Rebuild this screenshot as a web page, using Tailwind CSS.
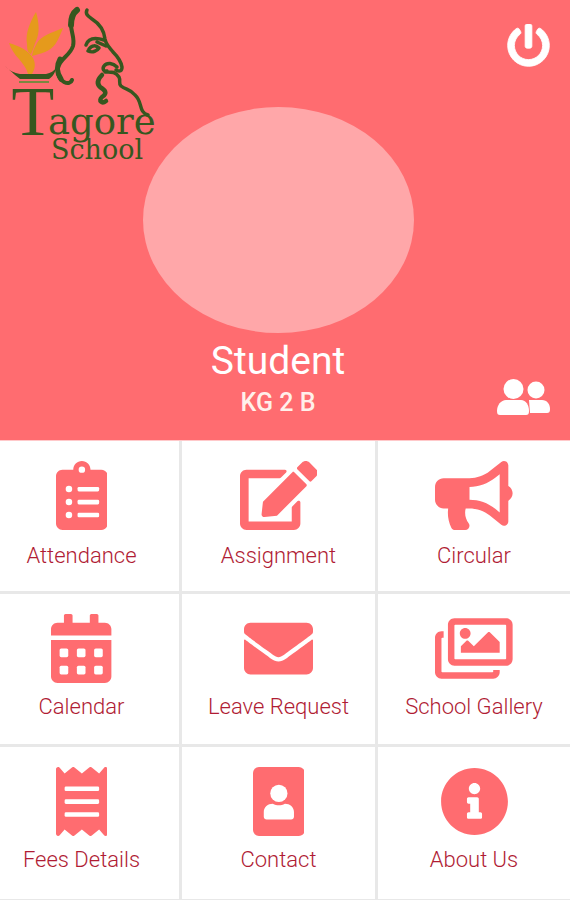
<!DOCTYPE html>
<html lang="en">

<head>
    <meta charset="UTF-8">
    <meta name="viewport" content="width=device-width, initial-scale=1.0">
    <title>Tagore School</title>
    <script src="https://cdn.jsdelivr.net/npm/@tailwindcss/browser@4"></script>
</head>

<body class="flex min-h-screen flex-col bg-white font-['Roboto',sans-serif]">
    <header class="grid min-h-[440px] grid-cols-[1fr_271px_1fr] bg-[#ff6c70] pr-3.5">
        <!-- School logo -->
        <div class="z-10 w-0">
            <svg class="h-[170px] w-[170px]" viewBox="0 0 170 170" role="img" aria-label="Tagore School">
                <g fill="#e59a1c">
                    <path d="M36 12C30 22 25 34 27 44c0 6 1 9 4 10 2-4 3-8 5-13 4-8 3-19 0-29z" />
                    <path d="M63 28c-12 5-22 8-26 15-3 5-5 10-5 13 6-2 12-3 17-6 7-4 10-12 14-22z" />
                    <path d="M9 43c2 6 6 12 10 16 4 5 8 10 9 15l4 0c3-5 4-10 1-16-4-7-13-12-24-15z" />
                </g>
                <g fill="#36571f">
                    <path d="M5 66c5 5 9 7 15 8h26c5-1 8-3 10-6-1 6-4 9-7 11H20c-4-3-8-7-15-13z" />
                    <path d="M19 81h30v2H19z" fill="#7b873f" />
                </g>
                <g fill="none" stroke="#36571f" stroke-linecap="round" stroke-linejoin="round">
                    <path d="M77 10c-4 3-6 8-6 15" stroke-width="6" />
                    <path d="M71 24c0 9 4 14 2 22-3 10-13 12-15 22-1 7 2 12 6 14 4 2 7 1 8-2" stroke-width="4" />
                    <path d="M60 59c-4 7-3 14 1 20" stroke-width="5" />
                    <path d="M87 10c-2 4 1 6 5 9 8 5 12 11 13 20 1 6 5 9 8 13 4 4 8 9 9 15 0 4-2 5-6 3" stroke-width="3.5" />
                    <path d="M86 45c2-6 8-8 18-5M88 51c5 2 9 0 11-3-3-3-7-3-10 1M97 42l9 4" stroke-width="3.5" />
                    <path d="M117 67c-4-4-10-5-13-1-2 3 0 6 3 5M105 72c6 0 10-1 14 5 2 4-1 6 2 9 5 4 9 3 14 9 8 7 3 17 13 20" stroke-width="3.5" />
                    <path d="M102 75c-5 5-5 9-2 12 5 3 8 6 2 10-4 4 0 7 4 4" stroke-width="4.500" />
                </g>
                <g fill="#36571f">
                    <text x="33" y="135" text-anchor="middle" class="font-['Liberation_Serif',serif] text-[70px]">T</text>
                    <text x="48" y="134" class="font-['DejaVu_Serif',serif] text-[37px]">agore</text>
                    <text x="51" y="159" class="font-['DejaVu_Serif',serif] text-[27px]">School</text>
                </g>
            </svg>
        </div>

        <!-- Student -->
        <div class="flex flex-col items-center pt-[107px] text-white">
            <div class="h-[226px] w-full rounded-[50%] bg-[#ffa7a9]"></div>
            <h1 class="pt-1 text-[39px] leading-[48px]">Student</h1>
            <p class="text-[25px] leading-9 font-medium text-[#fff0ea]">KG 2 B</p>
        </div>

        <div class="flex flex-col items-end justify-between pt-6 pr-1.5 pb-6 text-white">
            <button type="button" aria-label="Log out">
                <svg class="h-[43px] w-[43px]" viewBox="0 0 512 512" fill="currentColor" stroke="currentColor" stroke-width="10">
                    <path d="M400 54.1c63 45 104 118.6 104 201.9 0 136.8-110.8 247.7-247.5 248C120 504.3 8.2 393 8 256.4 7.9 173.1 48.9 99.3 111.8 54.2c11.7-8.3 28-4.8 35 7.7L162.6 90c5.9 10.5 3.1 23.8-6.6 31-41.5 30.8-68 79.6-68 134.9-.1 92.3 74.5 168.1 168 168.1 91.6 0 168.6-74.2 168-169.1-.3-51.8-24.7-101.8-68.1-134-9.7-7.2-12.4-20.5-6.5-30.9l15.8-28.1c7-12.4 23.2-16.1 34.8-7.8zM296 264V24c0-13.3-10.7-24-24-24h-32c-13.3 0-24 10.7-24 24v240c0 13.3 10.7 24 24 24h32c13.3 0 24-10.7 24-24z" />
                </svg>
            </button>
            <button type="button" aria-label="Switch student">
                <svg class="h-[37px] w-[53px]" viewBox="0 0 53 37" fill="currentColor">
                    <circle cx="39" cy="11" r="8.5" />
                    <path d="M32 21h13c5 0 8 4 8 9 0 3-1 4-3 4H33z" />
                    <circle cx="16.500" cy="10" r="10" />
                    <path d="M9 21h15c5 0 8 5 8 11 0 3-1 4-3 4H3c-2 0-3-1-3-4 0-6 4-11 9-11z" />
                </svg>
            </button>
        </div>
    </header>

    <nav class="grid grow grid-cols-[182fr_196fr_192fr] grid-rows-3 border-t border-[#ffc9ca] text-center text-[22px] leading-8 font-light text-[#b01c34]">
        <a href="#attendance" class="flex flex-col items-center border-r-3 border-b-3 border-[#e8e8e8] pt-5 pr-4">
            <svg class="h-[69px] text-[#ff6c70]" viewBox="0 0 384 512" fill="currentColor">
                <path d="M336 64h-80c0-35.300-28.700-64-64-64s-64 28.700-64 64H48C21.500 64 0 85.500 0 112v352c0 26.500 21.500 48 48 48h288c26.500 0 48-21.500 48-48V112c0-26.500-21.500-48-48-48z" />
                <g fill="#fff">
                    <circle cx="192" cy="64" r="24" />
                    <circle cx="96" cy="208" r="24" />
                    <circle cx="96" cy="304" r="24" />
                    <circle cx="96" cy="400" r="24" />
                    <rect x="160" y="192" width="160" height="34" rx="10" />
                    <rect x="160" y="288" width="160" height="34" rx="10" />
                    <rect x="160" y="384" width="160" height="34" rx="10" />
                </g>
            </svg>
            <span class="pt-2.5">Attendance</span>
        </a>
        <a href="#assignment" class="flex flex-col items-center border-r-3 border-b-3 border-[#e8e8e8] pt-5">
            <svg class="h-[69px] text-[#ff6c70]" viewBox="0 0 576 512" fill="currentColor">
                <path d="M402.600 83.200l90.200 90.200c3.800 3.800 3.800 10 0 13.800L274.400 405.600l-92.800 10.300c-12.400 1.400-22.900-9.100-21.500-21.500l10.300-92.800L388.800 83.200c3.800-3.800 10-3.800 13.800 0zm162-22.900l-48.800-48.800c-15.200-15.200-39.900-15.200-55.200 0l-35.400 35.400c-3.800 3.800-3.800 10 0 13.800l90.200 90.200c3.800 3.800 10 3.800 13.800 0l35.400-35.400c15.200-15.300 15.200-40 0-55.200zM384 346.200V448H64V128h229.800c3.200 0 6.200-1.300 8.500-3.500l40-40c7.600-7.600 2.200-20.500-8.500-20.500H48C21.500 64 0 85.500 0 112v352c0 26.500 21.500 48 48 48h352c26.500 0 48-21.500 48-48V306.200c0-10.700-12.900-16-20.500-8.500l-40 40c-2.200 2.300-3.500 5.300-3.500 8.500z" />
            </svg>
            <span class="pt-2.5">Assignment</span>
        </a>
        <a href="#circular" class="flex flex-col items-center border-b-3 border-[#e8e8e8] pt-5">
            <svg class="h-[69px] text-[#ff6c70]" viewBox="0 0 576 512" fill="currentColor">
                <path d="M576 240c0-23.630-12.950-44.040-32-55.120V32.010C544 23.260 537.020 0 512 0c-7.120 0-14.190 2.380-19.980 7.020l-85.030 68.030C364.280 109.190 310.660 128 256 128H64c-35.350 0-64 28.650-64 64v96c0 35.350 28.650 64 64 64h33.700c-1.390 10.480-2.180 21.140-2.180 32 0 39.770 9.260 77.350 25.560 110.940 5.190 10.690 16.520 17.060 28.400 17.060h74.280c26.050 0 41.690-29.840 25.900-50.560-16.400-21.520-26.150-48.360-26.150-77.440 0-11.110 1.620-21.790 4.410-32H256c54.660 0 108.280 18.810 150.980 52.950l85.030 68.030a32.023 32.023 0 0 0 19.980 7.020c24.920 0 32-22.780 32-32V295.130C563.050 284.040 576 263.630 576 240zm-96 141.420l-33.050-26.440C392.950 311.780 325.120 288 256 288v-96c69.120 0 136.950-23.780 190.950-66.980L480 98.580v282.840z" />
            </svg>
            <span class="pt-2.5">Circular</span>
        </a>

        <a href="#calendar" class="flex flex-col items-center border-r-3 border-b-3 border-[#e8e8e8] pt-5 pr-4">
            <svg class="h-[69px] text-[#ff6c70]" viewBox="0 0 448 512" fill="currentColor">
                <path d="M0 464c0 26.500 21.500 48 48 48h352c26.500 0 48-21.500 48-48V192H0v272zM448 160v-48c0-26.500-21.500-48-48-48h-48V12c0-6.600-5.400-12-12-12h-40c-6.600 0-12 5.400-12 12v52H160V12c0-6.600-5.400-12-12-12h-40c-6.600 0-12 5.400-12 12v52H48C21.500 64 0 85.500 0 112v48z" />
                <g fill="#fff">
                    <rect x="64" y="256" width="64" height="64" rx="12" />
                    <rect x="192" y="256" width="64" height="64" rx="12" />
                    <rect x="320" y="256" width="64" height="64" rx="12" />
                    <rect x="64" y="384" width="64" height="64" rx="12" />
                    <rect x="192" y="384" width="64" height="64" rx="12" />
                    <rect x="320" y="384" width="64" height="64" rx="12" />
                </g>
            </svg>
            <span class="pt-2">Calendar</span>
        </a>
        <a href="#leave-request" class="flex flex-col items-center border-r-3 border-b-3 border-[#e8e8e8] pt-5">
            <svg class="h-[69px] text-[#ff6c70]" viewBox="0 0 512 512" fill="currentColor">
                <path d="M502.300 190.800c3.900-3.100 9.700-.2 9.700 4.700V400c0 26.500-21.500 48-48 48H48c-26.500 0-48-21.500-48-48V195.600c0-5 5.700-7.800 9.700-4.700 22.400 17.400 52.100 39.500 154.100 113.600 21.100 15.400 56.700 47.800 92.200 47.600 35.700.3 72-32.800 92.300-47.600 102-74.100 131.600-96.300 154-113.700zM256 320c23.200.4 56.600-29.200 73.400-41.400 132.700-96.300 142.800-104.700 173.400-128.700 5.800-4.500 9.200-11.500 9.200-18.900v-19c0-26.500-21.500-48-48-48H48c-26.500 0-48 21.500-48 48v19c0 7.400 3.400 14.300 9.200 18.900 30.600 23.900 40.700 32.400 173.400 128.700 16.800 12.200 50.200 41.800 73.400 41.400z" />
            </svg>
            <span class="pt-2">Leave Request</span>
        </a>
        <a href="#gallery" class="flex flex-col items-center border-b-3 border-[#e8e8e8] pt-5">
            <svg class="h-[69px] text-[#ff6c70]" viewBox="0 0 576 512" fill="currentColor">
                <path d="M480 416v16c0 26.510-21.490 48-48 48H48c-26.510 0-48-21.490-48-48V176c0-26.510 21.490-48 48-48h16v48H54a6 6 0 0 0-6 6v244a6 6 0 0 0 6 6h372a6 6 0 0 0 6-6v-10h48zm42-336H150a6 6 0 0 0-6 6v244a6 6 0 0 0 6 6h372a6 6 0 0 0 6-6V86a6 6 0 0 0-6-6zm6-48c26.510 0 48 21.490 48 48v256c0 26.510-21.490 48-48 48H144c-26.510 0-48-21.490-48-48V80c0-26.510 21.490-48 48-48h384zM264 144c0 22.091-17.909 40-40 40s-40-17.909-40-40 17.909-40 40-40 40 17.909 40 40zm-72 96l39.515-39.515c4.686-4.686 12.284-4.686 16.971 0L288 240l103.515-103.515c4.686-4.686 12.284-4.686 16.971 0L480 208v80H192v-48z" />
            </svg>
            <span class="pt-2">School Gallery</span>
        </a>

        <a href="#fees" class="flex flex-col items-center border-r-3 border-b border-[#e8e8e8] pt-5 pr-4">
            <svg class="h-[69px] text-[#ff6c70]" viewBox="0 0 384 512" fill="currentColor">
                <path d="M358.400 3.200L320 48 265.600 3.200a15.900 15.900 0 0 0-19.200 0L192 48 137.600 3.200a15.900 15.900 0 0 0-19.200 0L64 48 25.600 3.200C15-4.700 0 2.800 0 16v480c0 13.200 15 20.700 25.600 12.800L64 464l54.400 44.800a15.900 15.900 0 0 0 19.200 0L192 464l54.400 44.800a15.900 15.900 0 0 0 19.200 0L320 464l38.400 44.800c10.500 7.900 25.600.4 25.600-12.800V16c0-13.200-15-20.700-25.600-12.800z" />
                <g fill="#fff">
                    <rect x="64" y="144" width="256" height="34" rx="10" />
                    <rect x="64" y="240" width="256" height="34" rx="10" />
                    <rect x="64" y="336" width="256" height="34" rx="10" />
                </g>
            </svg>
            <span class="pt-2">Fees Details</span>
        </a>
        <a href="#contact" class="flex flex-col items-center border-r-3 border-b border-[#e8e8e8] pt-5">
            <svg class="h-[69px] text-[#ff6c70]" viewBox="0 0 384 512" fill="currentColor">
                <rect width="384" height="512" rx="44" />
                <g fill="#fff">
                    <circle cx="192" cy="196" r="64" />
                    <path d="M147 272c30 17 60 17 90 0 37 0 67 26 67 62v36c0 12-9 20-21 20H101c-12 0-21-8-21-20v-36c0-36 30-62 67-62z" />
                </g>
            </svg>
            <span class="pt-2">Contact</span>
        </a>
        <a href="#about" class="flex flex-col items-center border-b border-[#e8e8e8] pt-5">
            <svg class="h-[69px] text-[#ff6c70]" viewBox="0 0 512 512" fill="currentColor">
                <path d="M256 8C119.043 8 8 119.083 8 256c0 136.997 111.043 248 248 248s248-111.003 248-248C504 119.083 392.957 8 256 8zm0 110c23.196 0 42 18.804 42 42s-18.804 42-42 42-42-18.804-42-42 18.804-42 42-42zm56 254c0 6.627-5.373 12-12 12h-88c-6.627 0-12-5.373-12-12v-24c0-6.627 5.373-12 12-12h12v-64h-12c-6.627 0-12-5.373-12-12v-24c0-6.627 5.373-12 12-12h64c6.627 0 12 5.373 12 12v100h12c6.627 0 12 5.373 12 12v24z" />
            </svg>
            <span class="pt-2">About Us</span>
        </a>
    </nav>
</body>

</html>
